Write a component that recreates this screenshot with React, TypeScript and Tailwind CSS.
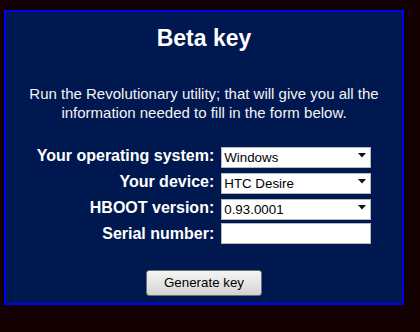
import React from "react";

function Arrow() {
  return (
    <svg
      className="pointer-events-none absolute right-[5px] top-[8px]"
      width="8"
      height="5"
      viewBox="0 0 8 5"
    >
      <path d="M0 0H8L4 4.5Z" fill="#111" />
    </svg>
  );
}

function Select({ value }: { value: string }) {
  return (
    <div className="relative h-[21px] w-[150px]">
      <select
        defaultValue={value}
        className="h-[21px] w-[150px] appearance-none rounded-none border border-[#b8b8b8] bg-white pl-[2px] text-[13.33px] leading-[19px] text-black outline-none"
      >
        <option>{value}</option>
      </select>
      <Arrow />
    </div>
  );
}

export default function App() {
  const font = { fontFamily: '"Liberation Sans", Arial, sans-serif' };
  return (
    <div className="h-[332px] w-[420px] overflow-hidden bg-[#130000] pl-[4px] pt-[10px]" style={font}>
      <div className="flex h-[295px] w-[400px] flex-col items-center border-2 border-[#0000ff] bg-[#001850] text-white">
        <h1 className="mt-[13px] text-[23px] font-bold leading-[26px]">Beta key</h1>
        <p className="mt-[33px] text-center text-[15px] leading-[19px] text-[#f4f4f4]">
          Run the Revolutionary utility; that will give you all the
          <br />
          information needed to fill in the form below.
        </p>
        <div className="mt-[23px] grid grid-cols-[auto_150px] items-center justify-center gap-x-[7px] gap-y-[5px]">
          <label className="text-right text-[16px] font-bold leading-[19px]">Your operating system:</label>
          <Select value="Windows" />
          <label className="text-right text-[16px] font-bold leading-[19px]">Your device:</label>
          <Select value="HTC Desire" />
          <label className="text-right text-[16px] font-bold leading-[19px]">HBOOT version:</label>
          <Select value="0.93.0001" />
          <label className="text-right text-[16px] font-bold leading-[19px]">Serial number:</label>
          <input
            type="text"
            className="h-[21px] w-[150px] rounded-none border border-[#b8b8b8] bg-white px-[2px] text-[13.33px] text-black outline-none"
          />
        </div>
        <button className="mt-[26px] h-[26px] w-[116px] rounded-[3px] border border-[#707070] bg-gradient-to-b from-[#f4f4f4] via-[#e6e6e6] to-[#d2d2d2] text-[13.33px] leading-[24px] text-black">
          Generate key
        </button>
      </div>
    </div>
  );
}
